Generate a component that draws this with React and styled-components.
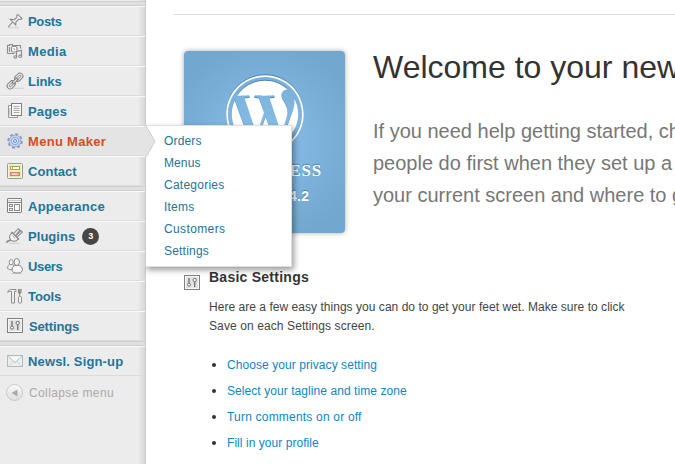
import React from "react";
import styled, { createGlobalStyle } from "styled-components";
import { FaWordpress } from "react-icons/fa";

const GlobalStyle = createGlobalStyle`
  * { box-sizing: border-box; }
  html, body { margin: 0; padding: 0; }
  body {
    width: 675px;
    height: 464px;
    overflow: hidden;
    background: #fff;
    color: #333;
    font-family: "Liberation Sans", Arial, sans-serif;
    font-size: 12px;
  }
`;

const Page = styled.div`
  display: flex;
  width: 675px;
  height: 464px;
  overflow: hidden;
`;

const Sidebar = styled.nav`
  flex: none;
  position: relative;
  z-index: 1;
  width: 146px;
  padding-top: 1px;
  background: linear-gradient(to left, rgba(0, 0, 0, 0.09), rgba(0, 0, 0, 0) 7px) #ececec;
  border-right: 1px solid #ccc;
`;

const Separator = styled.div`
  height: 5px;
  background: #dfdfdf;
  border: solid #cfcfcf;
  border-width: 1px 0;
`;

const MenuRow = styled.a`
  position: relative;
  display: flex;
  align-items: center;
  height: 30px;
  padding-left: 7px;
  border-top: 1px solid #f9f9f9;
  border-bottom: 1px solid #dbdbdb;
  color: ${(p) => (p.$active ? "#d54e21" : "#21759b")};
  background: ${(p) => (p.$active ? "#e4e4e4" : "transparent")};
`;

const Icon = styled.svg`
  flex: none;
  display: block;
  width: 16px;
  height: 16px;
  overflow: visible;
`;

const MenuLabel = styled.span`
  margin-left: ${(p) => p.$gap ?? 5}px;
  padding-top: 2px;
  font-size: 13px;
  font-weight: bold;
  line-height: 18px;
  white-space: nowrap;
  letter-spacing: ${(p) => p.$spacing ?? 0}px;
`;

const Count = styled.span`
  width: 17px;
  height: 17px;
  margin: 1px 0 0 7px;
  border-radius: 50%;
  background: #464646;
  color: #fff;
  font-size: 9px;
  font-weight: bold;
  line-height: 17px;
  text-align: center;
`;

const Collapse = styled.div`
  display: flex;
  align-items: center;
  height: 33px;
  padding-left: 6px;
  color: #aaa;
`;

const CollapseButton = styled.span`
  display: flex;
  align-items: center;
  justify-content: center;
  width: 17px;
  height: 17px;
  border: 1px solid #c9c9c9;
  border-radius: 50%;
  background: linear-gradient(#fafafa, #dedede);
`;

const CollapseLabel = styled.span`
  margin-left: 6px;
  font-size: 12px;
  letter-spacing: 0.38px;
`;

const Flyout = styled.div`
  position: absolute;
  left: 145px;
  top: -2px;
  width: 147px;
  height: 142px;
  padding: 4px 0 5px 19px;
  background: #fff;
  border: 1px solid #dfdfdf;
  border-left-color: #ccc;
  box-shadow: 2px 3px 6px rgba(0, 0, 0, 0.4);
  clip-path: inset(-4px -14px -14px 0);
`;

const FlyoutLink = styled.a`
  display: block;
  margin-left: -1px;
  height: 22px;
  color: #21759b;
  font-size: 12px;
  font-weight: normal;
  line-height: 22px;
  letter-spacing: ${(p) => p.$spacing ?? 0}px;
`;

const Arrow = styled.svg`
  position: absolute;
  left: 144px;
  top: -1px;
  width: 12px;
  height: 31px;
`;

const Main = styled.main`
  flex: 1;
  min-width: 0;
  overflow: hidden;
  padding: 14px 0 0 27px;
`;

const Welcome = styled.section`
  display: flex;
  border-top: 1px solid #dfdfdf;
  padding: 36px 0 0 11px;
`;

const Badge = styled.div`
  flex: none;
  display: flex;
  flex-direction: column;
  align-items: center;
  width: 161px;
  height: 182px;
  padding-top: 23px;
  border-radius: 4px;
  background: radial-gradient(circle at 50% 50%, #89c0ea 0, #72a7cf 100px);
  box-shadow: 0 0 5px rgba(0, 0, 0, 0.35);
  color: #fff;
  text-shadow: 0 -1px 1px rgba(0, 60, 110, 0.4);

  svg { filter: drop-shadow(0 -1px 0.5px rgba(20, 70, 120, 0.4)); }
`;

const BadgeName = styled.div`
  margin-top: 7px;
  font: bold 17px/20px "Liberation Serif", "Times New Roman", serif;
  letter-spacing: 0.85px;
`;

const BadgeVersion = styled.div`
  margin-top: 6px;
  font-size: 14px;
  font-weight: bold;
  line-height: 18px;
  letter-spacing: 0.3px;
`;

const Intro = styled.div`
  margin-left: 28px;
  white-space: nowrap;
`;

const Title = styled.h1`
  margin: -3px 0 29px;
  color: #333;
  font-size: 32px;
  font-weight: normal;
  line-height: 38px;
`;

const Lead = styled.p`
  margin: 0;
  color: #777;
  font-size: 20px;
  line-height: 32px;
`;

const Basics = styled.section`
  display: flex;
  padding: 34px 0 0 11px;

  > svg { margin-top: 8px; }
`;

const BasicsBody = styled.div`
  margin-left: 9px;
`;

const Heading = styled.h2`
  margin: 0 0 11px;
  color: #333;
  font-size: 14px;
  line-height: 20px;
  letter-spacing: 0.25px;
`;

const Copy = styled.p`
  margin: 0;
  color: #444;
  line-height: 19px;
  white-space: nowrap;
`;

const Line = styled.span`
  display: block;
  letter-spacing: ${(p) => p.$spacing ?? 0}px;
`;

const Tasks = styled.ul`
  margin: 16px 0 0;
  padding: 0 0 0 3px;
  list-style: none;
`;

const Task = styled.li`
  display: flex;
  align-items: center;
  height: 26px;
  line-height: 26px;
  letter-spacing: ${(p) => p.$spacing ?? 0}px;
  color: #0e86ca;

  &::before {
    content: "";
    width: 4px;
    height: 4px;
    margin-right: 11px;
    border-radius: 50%;
    background: #333;
  }
`;

const stroke = { fill: "none", stroke: "#8c8c8c", strokeWidth: 1.1 };

const PinIcon = () => (
  <Icon viewBox="0 0 16 16">
    <path d="M1 14.7h11" stroke="#cfcfcf" />
    <path d="M1.2 13.8 5.5 9.2" {...stroke} />
    <path d="m3.3 6.4 5.4 5.6.3-3.2 2.7-2.5 2.4.1.8-1-4.2-4-.9.9.2 2-2.8 2.2Z" {...stroke} fill="#f6f6f6" />
    <path d="m7 7.5 3-2.8" stroke="#aaa" />
  </Icon>
);

const MediaIcon = () => (
  <Icon viewBox="0 0 16 16">
    <path d="M.5 10.5v-8h2v-1h3v1h8v3M.5 10.5h7M2.5 4v5" {...stroke} />
    <rect x="4.5" y="3.5" width="5.5" height="5.5" rx="1.5" {...stroke} fill="#fff" />
    <circle cx="7.2" cy="6.2" r="1" fill="#aaa" />
    <path d="M9.5 13.8V8.5l5-1v5.7" {...stroke} />
    <ellipse cx="8.3" cy="13.9" rx="1.4" ry="1.2" {...stroke} />
    <ellipse cx="13.2" cy="13.3" rx="1.4" ry="1.2" {...stroke} />
  </Icon>
);

const LinkIcon = () => (
  <Icon viewBox="0 0 16 16">
    <path d="M5 15.3h12" stroke="#d3d3d3" />
    <g transform="rotate(-45 8 8)" fill="none">
      <rect x="-1.9" y="5" width="9" height="6" rx="3" fill="#f2f2f2" stroke="#808080" />
      <rect x=".2" y="7" width="4.8" height="2" rx="1" fill="#ececec" stroke="#999" />
      <rect x="8.9" y="5" width="9" height="6" rx="3" fill="#f2f2f2" stroke="#808080" />
      <rect x="11" y="7" width="4.8" height="2" rx="1" fill="#ececec" stroke="#999" />
      <rect x="5" y="6.9" width="6" height="2.2" fill="#eee" stroke="#777" />
    </g>
  </Icon>
);

const PagesIcon = () => (
  <Icon viewBox="0 0 16 16">
    <path d="M4.5 2.5h-3v12h9v-2" fill="#f5f5f5" stroke="#999" />
    <rect x="4.5" y=".5" width="10" height="12" fill="#f8f8f8" stroke="#808080" />
    <path d="M6.5 3.5h6M6.5 5.5h6M6.5 7.5h6M6.5 9.5h6" stroke="#aaa" />
    <path d="M2.8 5v7.5" stroke="#bbb" />
  </Icon>
);

const GearIcon = () => (
  <Icon viewBox="0 0 16 16">
    <circle cx="8" cy="8" r="6.8" fill="none" stroke="#8197c4" strokeWidth="1.8" strokeDasharray="2.9 2.44" />
    <circle cx="8" cy="8" r="5.9" fill="#c3d3f1" stroke="#92a7d3" strokeWidth=".9" />
    <circle cx="8" cy="8" r="3.6" fill="#dde8fb" stroke="#8ca4d3" />
    <circle cx="8" cy="8" r="1.5" fill="#f5f8ff" stroke="#6482bf" />
  </Icon>
);

const ContactIcon = () => (
  <Icon viewBox="0 0 16 16">
    <rect x=".5" y=".5" width="15" height="15" rx="1" fill="#f7f7f2" stroke="#999" />
    <rect x="2.3" y="2.3" width="11.4" height="11.4" fill="#eef0b8" stroke="#e3e5a8" />
    <rect x="3.5" y="3.5" width="9" height="3" fill="#fff" stroke="#a2ad4a" />
    <path d="M5.5 3.5v3" stroke="#a2ad4a" />
    <rect x="3.5" y="9.5" width="9" height="3" fill="#f1ab93" stroke="#db806a" />
    <path d="M5 11h5" stroke="#fff" />
  </Icon>
);

const AppearanceIcon = () => (
  <Icon viewBox="0 0 16 16">
    <rect x=".5" y=".5" width="14" height="14" rx=".5" fill="#f8f8f8" stroke="#808080" />
    <path d="M1 2.5h13" stroke="#ccc" />
    <path d="M1 4.5h13" stroke="#808080" />
    <rect x="2.5" y="6.5" width="3" height="2" {...stroke} strokeWidth="1" />
    <rect x="2.5" y="10.5" width="3" height="2" {...stroke} strokeWidth="1" />
    <rect x="7.5" y="6.5" width="5" height="6" {...stroke} strokeWidth="1" />
  </Icon>
);

const PlugIcon = () => (
  <Icon viewBox="0 0 16 16">
    <path d="M2 15.3h11" stroke="#d0d0d0" />
    <path d="M-.5 14.8c1-3 2.2-1 4.4-3.2" {...stroke} strokeWidth="1.6" />
    <path d="M3.9 12.1C1.9 10 2.6 7.3 4.2 5.5l.9-.9 6.3 6.2C9.6 12.8 6.6 14.4 3.9 12.1Z" {...stroke} fill="#f4f4f4" />
    <path d="m4.6 4 7.4 7.3M6.6 5.7 11.4.7l1.5 1.4-4.5 5.5M10 9.1l5.3-5.2-1.4-1.3-5.2 5.3" {...stroke} fill="#f4f4f4" />
    <path d="m5.2 7.5 3.2 3.2" stroke="#aaa" />
  </Icon>
);

const UsersIcon = () => (
  <Icon viewBox="0 0 16 16">
    <path d="M4 15.5h11" stroke="#ccc" />
    <ellipse cx="4.2" cy="4.3" rx="2" ry="2.7" fill="#f5f5f5" stroke="#909090" />
    <path d="M.6 10.5c0-2.8.8-4 3.5-4s3.4 1.2 3.4 4c-1.5 1.6-5 1.6-6.9 0Z" fill="#f5f5f5" stroke="#909090" />
    <ellipse cx="9.8" cy="4" rx="2.7" ry="3.5" fill="#f8f8f8" stroke="#888" />
    <path d="M5 12c0-3.5 1.7-4.7 5.1-4.7S15.4 8.500 15.400 12c0 4-10.400 4-10.400 0Z" fill="#f8f8f8" stroke="#888" />
  </Icon>
);

const ToolsIcon = () => (
  <Icon viewBox="0 0 16 16">
    <path d="M.7 4.500C1 2 3 1.500 5 1.500h4v2H7.500V15h-3V3.500C2.700 3.100 1.500 3.500.7 4.500Z" {...stroke} fill="#eee" strokeWidth="1" />
    <path d="M11.500 1v3.500l1 1.500L14 4.500V1M12.700 1v7" {...stroke} />
    <rect x="11.500" y="8.500" width="3" height="6.500" rx="1" {...stroke} fill="#f5f5f5" strokeWidth="1" />
  </Icon>
);

const SettingsIcon = () => (
  <Icon viewBox="0 0 16 16">
    <rect x=".5" y=".5" width="15" height="14" fill="#e2e2e2" stroke="#808080" />
    <rect x="1.500" y="1.500" width="13" height="12" fill="none" stroke="#f7f7f7" />
    <path d="M5 3v5M10.700 7v5" stroke="#777" strokeWidth="1.400" />
    <circle cx="5" cy="9.700" r="1.500" fill="#fff" stroke="#707070" />
    <circle cx="10.700" cy="5" r="1.700" fill="#fff" stroke="#707070" />
  </Icon>
);

const MailIcon = () => (
  <Icon viewBox="0 0 16 16">
    <rect x=".5" y="2.500" width="15" height="11" fill="#e9efee" stroke="#b3bcbc" />
    <path d="m1.500 13 5-5M14.500 13l-5-5" stroke="#cbd5d4" />
    <path d="m1.200 3.200 6.800 6.400 6.800-6.400" fill="#f6f9f8" stroke="#b4c3c0" />
  </Icon>
);

const flyoutItems = [
  ["Orders", 0.15],
  ["Menus", 0.1],
  ["Categories", 0.25],
  ["Items", 0.2],
  ["Customers", 0.38],
  ["Settings", 0.2],
];

const groups = [
  [
    { label: "Posts", icon: PinIcon, spacing: -0.35 },
    { label: "Media", icon: MediaIcon, spacing: 0.35 },
    { label: "Links", icon: LinkIcon, spacing: -0.05 },
    { label: "Pages", icon: PagesIcon, spacing: 0.15 },
    { label: "Menu Maker", icon: GearIcon, active: true, spacing: 0.3 },
    { label: "Contact", icon: ContactIcon, spacing: 0.05 },
  ],
  [
    { label: "Appearance", icon: AppearanceIcon, spacing: 0.25 },
    { label: "Plugins", icon: PlugIcon, count: 3, spacing: 0.05 },
    { label: "Users", icon: UsersIcon, spacing: -0.35 },
    { label: "Tools", icon: ToolsIcon, spacing: -0.1 },
    { label: "Settings", icon: SettingsIcon, gap: 6, spacing: -0.15 },
  ],
  [{ label: "Newsl. Sign-up", icon: MailIcon, spacing: 0.15 }],
];

const tasks = [
  ["Choose your privacy setting", 0.07],
  ["Select your tagline and time zone", 0.07],
  ["Turn comments on or off", 0.2],
  ["Fill in your profile", 0.05],
];

function MenuItem({ item }) {
  const Glyph = item.icon;
  return (
    <MenuRow $active={item.active}>
      <Glyph />
      <MenuLabel $gap={item.gap} $spacing={item.spacing}>{item.label}</MenuLabel>
      {item.count && <Count>{item.count}</Count>}
      {item.active && (
        <>
          <Flyout>
            {flyoutItems.map(([label, space]) => (
              <FlyoutLink key={label} $spacing={space}>{label}</FlyoutLink>
            ))}
          </Flyout>
          <Arrow viewBox="0 0 12 31">
            <path d="M0 0h2l9 15.5L2 31H0Z" fill="#e4e4e4" />
            <path d="M2 0l9 15.5L2 31" fill="none" stroke="#ccc" />
          </Arrow>
        </>
      )}
    </MenuRow>
  );
}

export default function App() {
  return (
    <>
      <GlobalStyle />
      <Page>
        <Sidebar>
          {groups.map((items) => (
            <React.Fragment key={items[0].label}>
              <Separator />
              {items.map((item) => <MenuItem key={item.label} item={item} />)}
            </React.Fragment>
          ))}
          <Collapse>
            <CollapseButton>
              <svg width="7" height="8" viewBox="0 0 7 8"><path d="M6.5.5v7L.5 4Z" fill="#aaa" /></svg>
            </CollapseButton>
            <CollapseLabel>Collapse menu</CollapseLabel>
          </Collapse>
        </Sidebar>
        <Main>
          <Welcome>
            <Badge>
              <FaWordpress size={80} />
              <BadgeName>WORDPRESS</BadgeName>
              <BadgeVersion>Version 3.4.2</BadgeVersion>
            </Badge>
            <Intro>
              <Title>Welcome to your new</Title>
              <Lead>
                If you need help getting started, ch<br />
                people do first when they set up a<br />
                your current screen and where to g
              </Lead>
            </Intro>
          </Welcome>
          <Basics>
            <SettingsIcon />
            <BasicsBody>
              <Heading>Basic Settings</Heading>
              <Copy>
                <Line $spacing={0.035}>Here are a few easy things you can do to get your feet wet. Make sure to click</Line>
                <Line $spacing={0.1}>Save on each Settings screen.</Line>
              </Copy>
              <Tasks>
                {tasks.map(([label, space]) => <Task key={label} $spacing={space}>{label}</Task>)}
              </Tasks>
            </BasicsBody>
          </Basics>
        </Main>
      </Page>
    </>
  );
}
